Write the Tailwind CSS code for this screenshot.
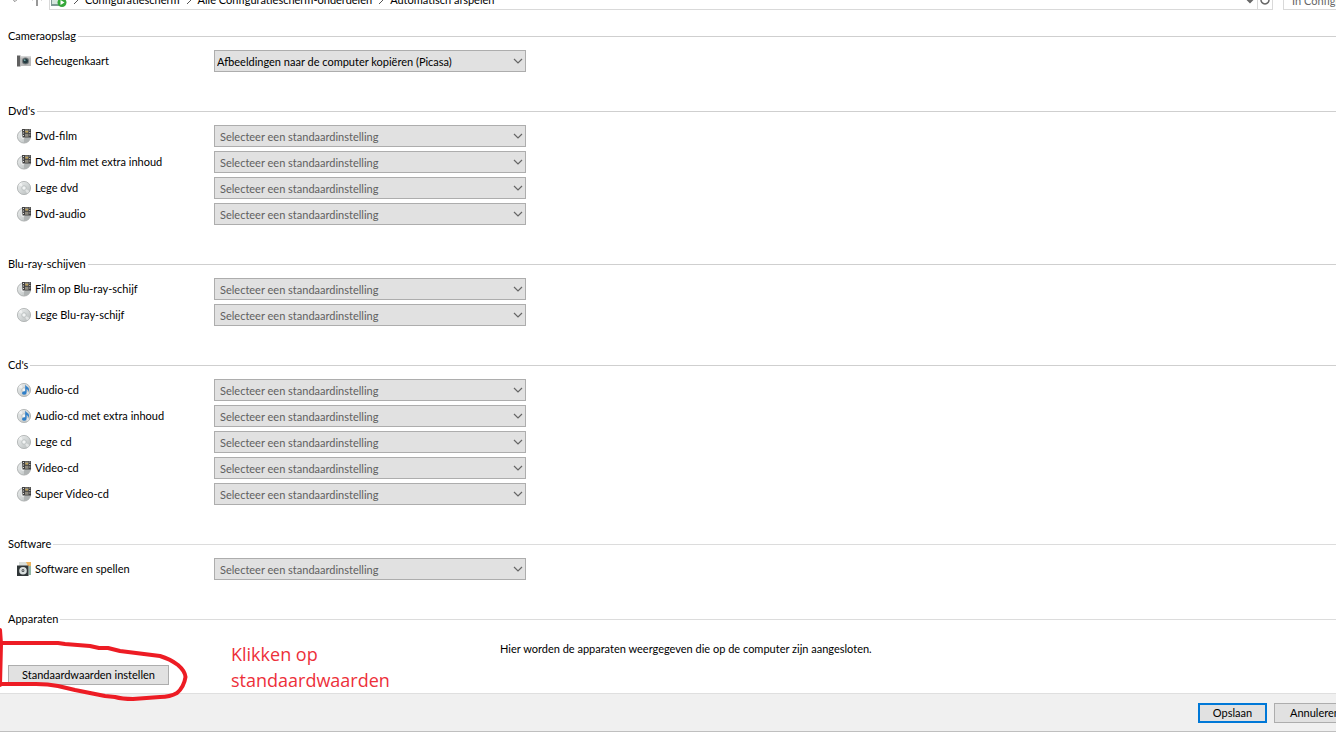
<!DOCTYPE html>
<html lang="nl">
  <head>
    <meta charset="UTF-8" />
    <meta name="viewport" content="width=device-width, initial-scale=1.0" />
    <script src="https://cdn.jsdelivr.net/npm/@tailwindcss/browser@4"></script>
    <title>Automatisch afspelen</title>
  </head>
  <body class="relative flex min-h-screen flex-col overflow-x-hidden bg-white font-['Lato','Noto_Sans',sans-serif] text-[11px] leading-4 text-black">
    <!-- shared icons -->
    <svg class="absolute h-0 w-0">
      <defs>
        <linearGradient id="silver" x1="0" y1="0" x2="1" y2="1">
          <stop offset="0" stop-color="#eef0f0" />
          <stop offset="0.5" stop-color="#d3d7d7" />
          <stop offset="1" stop-color="#b4b9b9" />
        </linearGradient>
        <symbol id="disc" viewBox="0 0 16 16">
          <circle cx="8" cy="8" r="6.6" fill="url(#silver)" stroke="#a9adad" stroke-width="0.8" />
          <path d="M8 8L2.500 5A6.200 6.200 0 0 1 5 2.600zM8 8l5.500 3A6.200 6.200 0 0 1 11 13.400z" fill="#fff" opacity="0.5" />
          <circle cx="8" cy="8" r="2.300" fill="#e8ebeb" stroke="#b2b7b7" stroke-width="0.7" />
          <circle cx="8" cy="8" r="0.800" fill="#fff" />
        </symbol>
        <symbol id="film" viewBox="0 0 16 16">
          <circle cx="8" cy="8.500" r="6.600" fill="url(#silver)" stroke="#a3a7a7" stroke-width="0.8" />
          <path d="M8 9h6.400A6.600 6.600 0 0 1 8 15z" fill="#b0b4b4" />
          <circle cx="7" cy="9" r="1.800" fill="#f4f5f5" />
          <path d="M6 1h9v8.500H6.500z" fill="#404040" />
          <path d="M9 1.500h3.500v3H9zM9 5.800h3.500v3H9z" fill="#8f8b80" />
          <path d="M9.500 3h2.500v1.500H9.500z" fill="#c3a355" />
          <path d="M7 2h1v1H7zM7 4.500h1v1H7zM7 7h1v1H7zM13.300 1.500h1v1h-1zM13.300 4h1v1h-1zM13.300 6.500h1v1h-1z" fill="#ddd" />
        </symbol>
        <symbol id="audio" viewBox="0 0 16 16">
          <use href="#disc" />
          <path d="M9.200 2.500c.5 1.800 3.600 2.300 3.800 4.800.1 1.100-.4 2-.9 2.600.2-1.500-.4-2.400-1.500-2.800v3.400c0 1.300-1 2.300-2.600 2.300-1.300 0-2-.8-1.900-1.700.1-1.200 1.500-2 3.100-1.700z" fill="#2f7fc9" />
        </symbol>
        <symbol id="camera" viewBox="0 0 16 16">
          <path d="M1 2.500h3.500v11H1z" fill="#606060" />
          <path d="M4.500 3h10.500v10H4.500z" fill="#b9b9b9" />
          <path d="M4.500 3h10.500v1.500H4.500z" fill="#d6d6d6" />
          <circle cx="9.500" cy="8" r="3.600" fill="#757a7b" />
          <circle cx="9.500" cy="8" r="2.500" fill="#253c42" />
          <circle cx="8.700" cy="7.200" r="0.900" fill="#72a6a4" />
        </symbol>
        <symbol id="software" viewBox="0 0 16 16">
          <path d="M3 1h12v13H3z" fill="#d9dedb" />
          <path d="M10 1h5v4h-3z" fill="#eeb45f" />
          <path d="M13 5h2v9h-2z" fill="#91b6a6" />
          <path d="M1 4.500h11.500V15H1z" fill="#303638" />
          <circle cx="7" cy="9.700" r="3.800" fill="#d9dede" />
          <circle cx="7" cy="9.700" r="1.400" fill="#303638" />
          <circle cx="7" cy="9.700" r="0.600" fill="#fff" />
        </symbol>
        <symbol id="chevron" viewBox="0 0 10 6">
          <path d="M1 1l4 4 4-4" fill="none" stroke="#666" stroke-width="1.200" />
        </symbol>
      </defs>
    </svg>

    <nav class="flex h-[10px] shrink-0 items-end overflow-hidden text-black">
      <div class="flex h-5 w-[49px] shrink-0 items-center justify-end gap-3 pr-1.5">
        <svg class="h-1.5 w-2" viewBox="0 0 10 6"><path d="M1 1l4 4 4-4" fill="none" stroke="#777" stroke-width="1.200" /></svg>
        <svg class="h-3 w-3" viewBox="0 0 12 12"><path d="M6 12V1M1 6l5-5 5 5" fill="none" stroke="#777" stroke-width="1.500" /></svg>
      </div>
      <div class="flex h-5 min-w-0 flex-1 items-center border border-[#d9d9d9] pl-px">
        <svg class="h-4 w-4 shrink-0" viewBox="0 0 16 16">
          <path d="M0 3h12v11H0z" fill="#7e9a94" />
          <path d="M1 4h10v8H1z" fill="#d5e5dd" />
          <circle cx="11" cy="10.500" r="4.500" fill="#35a83a" />
          <path d="M9.500 8l4 2.500-4 2.500z" fill="#fff" />
        </svg>
        <svg class="mx-1.5 h-2 w-1.5 shrink-0" viewBox="0 0 6 8"><path d="M1 0l4 4-4 4" fill="none" stroke="#555" /></svg>
        <a href="#">Configuratiescherm</a>
        <svg class="mx-1.5 h-2 w-1.5 shrink-0" viewBox="0 0 6 8"><path d="M1 0l4 4-4 4" fill="none" stroke="#555" /></svg>
        <a href="#">Alle Configuratiescherm-onderdelen</a>
        <svg class="mx-1.5 h-2 w-1.5 shrink-0" viewBox="0 0 6 8"><path d="M1 0l4 4-4 4" fill="none" stroke="#555" /></svg>
        <a href="#">Automatisch afspelen</a>
        <button type="button" aria-label="Vorige locaties" class="ml-auto px-0.5">
          <svg class="h-2 w-2.5" viewBox="0 0 10 8"><path d="M1 2l4 4 4-4" fill="none" stroke="#666" stroke-width="2" /></svg>
        </button>
        <button type="button" aria-label="Vernieuwen" class="flex h-5 w-[15px] items-center justify-center border-l border-[#d9d9d9]">
          <svg class="h-2.5 w-2.5" viewBox="0 0 10 10"><path d="M7 1.500A4 4 0 1 1 3 1.500" fill="none" stroke="#666" stroke-width="1.500" /></svg>
        </button>
      </div>
      <input type="text" aria-label="Zoeken" placeholder="In Configuratiescherm zoeken" class="-mr-2 ml-2.5 h-5 w-[61px] shrink-0 border border-[#d9d9d9] pl-2 placeholder:text-[#666]" />
    </nav>

    <main class="flex flex-1 flex-col pt-[18px]">
      <section class="pb-[29px]">
        <h2 class="flex items-center gap-0.5 pl-2">Cameraopslag<span class="h-px flex-1 bg-[#cfcfcf]"></span></h2>
        <div class="mt-1 flex h-[26px] items-center pl-4">
          <label for="card" class="flex w-[198px] items-center gap-[3px]"><svg class="h-4 w-4"><use href="#camera" /></svg>Geheugenkaart</label>
          <div class="relative w-[312px]">
            <select id="card" class="block h-[22px] w-full appearance-none border border-[#adadad] bg-[#e1e1e1] pt-0.5 pl-0.5"><option>Afbeeldingen naar de computer kopiëren (Picasa)</option></select>
            <svg class="pointer-events-none absolute top-2 right-[3px] h-1.5 w-2.5"><use href="#chevron" /></svg>
          </div>
        </div>
      </section>

      <section class="pb-[29px]">
        <h2 class="flex items-center gap-0.5 pl-2">Dvd's<span class="h-px flex-1 bg-[#cfcfcf]"></span></h2>
        <div class="mt-1 flex h-[26px] items-center pl-4">
          <label for="dvd-film" class="flex w-[198px] items-center gap-[3px]"><svg class="h-4 w-4"><use href="#film" /></svg>Dvd-film</label>
          <div class="relative w-[312px]">
            <select id="dvd-film" class="block h-[22px] w-full appearance-none border border-[#adadad] bg-[#e1e1e1] pt-0.5 pl-[5px] text-[#606060]"><option>Selecteer een standaardinstelling</option></select>
            <svg class="pointer-events-none absolute top-2 right-[3px] h-1.5 w-2.5"><use href="#chevron" /></svg>
          </div>
        </div>
        <div class="flex h-[26px] items-center pl-4">
          <label for="dvd-extra" class="flex w-[198px] items-center gap-[3px]"><svg class="h-4 w-4"><use href="#film" /></svg>Dvd-film met extra inhoud</label>
          <div class="relative w-[312px]">
            <select id="dvd-extra" class="block h-[22px] w-full appearance-none border border-[#adadad] bg-[#e1e1e1] pt-0.5 pl-[5px] text-[#606060]"><option>Selecteer een standaardinstelling</option></select>
            <svg class="pointer-events-none absolute top-2 right-[3px] h-1.5 w-2.5"><use href="#chevron" /></svg>
          </div>
        </div>
        <div class="flex h-[26px] items-center pl-4">
          <label for="dvd-blank" class="flex w-[198px] items-center gap-[3px]"><svg class="h-4 w-4"><use href="#disc" /></svg>Lege dvd</label>
          <div class="relative w-[312px]">
            <select id="dvd-blank" class="block h-[22px] w-full appearance-none border border-[#adadad] bg-[#e1e1e1] pt-0.5 pl-[5px] text-[#606060]"><option>Selecteer een standaardinstelling</option></select>
            <svg class="pointer-events-none absolute top-2 right-[3px] h-1.5 w-2.5"><use href="#chevron" /></svg>
          </div>
        </div>
        <div class="flex h-[26px] items-center pl-4">
          <label for="dvd-audio" class="flex w-[198px] items-center gap-[3px]"><svg class="h-4 w-4"><use href="#film" /></svg>Dvd-audio</label>
          <div class="relative w-[312px]">
            <select id="dvd-audio" class="block h-[22px] w-full appearance-none border border-[#adadad] bg-[#e1e1e1] pt-0.5 pl-[5px] text-[#606060]"><option>Selecteer een standaardinstelling</option></select>
            <svg class="pointer-events-none absolute top-2 right-[3px] h-1.5 w-2.5"><use href="#chevron" /></svg>
          </div>
        </div>
      </section>

      <section class="pb-[29px]">
        <h2 class="flex items-center gap-0.5 pl-2">Blu-ray-schijven<span class="h-px flex-1 bg-[#cfcfcf]"></span></h2>
        <div class="mt-1 flex h-[26px] items-center pl-4">
          <label for="bluray-film" class="flex w-[198px] items-center gap-[3px]"><svg class="h-4 w-4"><use href="#film" /></svg>Film op Blu-ray-schijf</label>
          <div class="relative w-[312px]">
            <select id="bluray-film" class="block h-[22px] w-full appearance-none border border-[#adadad] bg-[#e1e1e1] pt-0.5 pl-[5px] text-[#606060]"><option>Selecteer een standaardinstelling</option></select>
            <svg class="pointer-events-none absolute top-2 right-[3px] h-1.5 w-2.5"><use href="#chevron" /></svg>
          </div>
        </div>
        <div class="flex h-[26px] items-center pl-4">
          <label for="bluray-blank" class="flex w-[198px] items-center gap-[3px]"><svg class="h-4 w-4"><use href="#disc" /></svg>Lege Blu-ray-schijf</label>
          <div class="relative w-[312px]">
            <select id="bluray-blank" class="block h-[22px] w-full appearance-none border border-[#adadad] bg-[#e1e1e1] pt-0.5 pl-[5px] text-[#606060]"><option>Selecteer een standaardinstelling</option></select>
            <svg class="pointer-events-none absolute top-2 right-[3px] h-1.5 w-2.5"><use href="#chevron" /></svg>
          </div>
        </div>
      </section>

      <section class="pb-[29px]">
        <h2 class="flex items-center gap-0.5 pl-2">Cd's<span class="h-px flex-1 bg-[#cfcfcf]"></span></h2>
        <div class="mt-1 flex h-[26px] items-center pl-4">
          <label for="cd-audio" class="flex w-[198px] items-center gap-[3px]"><svg class="h-4 w-4"><use href="#audio" /></svg>Audio-cd</label>
          <div class="relative w-[312px]">
            <select id="cd-audio" class="block h-[22px] w-full appearance-none border border-[#adadad] bg-[#e1e1e1] pt-0.5 pl-[5px] text-[#606060]"><option>Selecteer een standaardinstelling</option></select>
            <svg class="pointer-events-none absolute top-2 right-[3px] h-1.5 w-2.5"><use href="#chevron" /></svg>
          </div>
        </div>
        <div class="flex h-[26px] items-center pl-4">
          <label for="cd-extra" class="flex w-[198px] items-center gap-[3px]"><svg class="h-4 w-4"><use href="#audio" /></svg>Audio-cd met extra inhoud</label>
          <div class="relative w-[312px]">
            <select id="cd-extra" class="block h-[22px] w-full appearance-none border border-[#adadad] bg-[#e1e1e1] pt-0.5 pl-[5px] text-[#606060]"><option>Selecteer een standaardinstelling</option></select>
            <svg class="pointer-events-none absolute top-2 right-[3px] h-1.5 w-2.5"><use href="#chevron" /></svg>
          </div>
        </div>
        <div class="flex h-[26px] items-center pl-4">
          <label for="cd-blank" class="flex w-[198px] items-center gap-[3px]"><svg class="h-4 w-4"><use href="#disc" /></svg>Lege cd</label>
          <div class="relative w-[312px]">
            <select id="cd-blank" class="block h-[22px] w-full appearance-none border border-[#adadad] bg-[#e1e1e1] pt-0.5 pl-[5px] text-[#606060]"><option>Selecteer een standaardinstelling</option></select>
            <svg class="pointer-events-none absolute top-2 right-[3px] h-1.5 w-2.5"><use href="#chevron" /></svg>
          </div>
        </div>
        <div class="flex h-[26px] items-center pl-4">
          <label for="cd-video" class="flex w-[198px] items-center gap-[3px]"><svg class="h-4 w-4"><use href="#film" /></svg>Video-cd</label>
          <div class="relative w-[312px]">
            <select id="cd-video" class="block h-[22px] w-full appearance-none border border-[#adadad] bg-[#e1e1e1] pt-0.5 pl-[5px] text-[#606060]"><option>Selecteer een standaardinstelling</option></select>
            <svg class="pointer-events-none absolute top-2 right-[3px] h-1.5 w-2.5"><use href="#chevron" /></svg>
          </div>
        </div>
        <div class="flex h-[26px] items-center pl-4">
          <label for="cd-super" class="flex w-[198px] items-center gap-[3px]"><svg class="h-4 w-4"><use href="#film" /></svg>Super Video-cd</label>
          <div class="relative w-[312px]">
            <select id="cd-super" class="block h-[22px] w-full appearance-none border border-[#adadad] bg-[#e1e1e1] pt-0.5 pl-[5px] text-[#606060]"><option>Selecteer een standaardinstelling</option></select>
            <svg class="pointer-events-none absolute top-2 right-[3px] h-1.5 w-2.5"><use href="#chevron" /></svg>
          </div>
        </div>
      </section>

      <section class="pb-[29px]">
        <h2 class="flex items-center gap-0.5 pl-2">Software<span class="h-px flex-1 bg-[#dcdcdc]"></span></h2>
        <div class="mt-1 flex h-[26px] items-center pl-4">
          <label for="software-games" class="flex w-[198px] items-center gap-[3px]"><svg class="h-4 w-4"><use href="#software" /></svg>Software en spellen</label>
          <div class="relative w-[312px]">
            <select id="software-games" class="block h-[22px] w-full appearance-none border border-[#adadad] bg-[#e1e1e1] pt-0.5 pl-[5px] text-[#606060]"><option>Selecteer een standaardinstelling</option></select>
            <svg class="pointer-events-none absolute top-2 right-[3px] h-1.5 w-2.5"><use href="#chevron" /></svg>
          </div>
        </div>
      </section>

      <section class="relative pb-2">
        <h2 class="flex items-center gap-0.5 pl-2">Apparaten<span class="h-px flex-1 bg-[#dcdcdc]"></span></h2>
        <p class="mt-3.5 pl-[500px]">Hier worden de apparaten weergegeven die op de computer zijn aangesloten.</p>
        <button type="button" class="mt-2 ml-2 block h-5 w-[161px] border border-[#adadad] bg-[#e1e1e1] leading-4">Standaardwaarden instellen</button>

        <!-- hand-drawn marker and note, on top of the page -->
        <svg class="pointer-events-none absolute top-4 left-0 z-10 h-20 w-[192px]" viewBox="0 0 192 80" fill="none" stroke="#ed1c24" stroke-width="4" stroke-linecap="round" stroke-linejoin="round">
          <path d="M0 3L1 17L0 58" />
          <path d="M0 16H58L65 17L90 19L99 21H108L120 24L160 29Q170 32 178 38Q185 44 185.500 50Q184 60 177 66Q170 70 160 70L133 72Q122 72 115 70L105 69L75 63L58 59Q48 57 36 57H0" />
        </svg>
        <p class="absolute top-[30px] left-[231px] font-['Open_Sans','Noto_Sans',sans-serif] text-[18px] leading-[26px] text-[#ed303a]">Klikken op<br />standaardwaarden</p>
      </section>
    </main>

    <footer class="flex h-[39px] shrink-0 items-center justify-end gap-[7px] border-t border-b border-t-[#dfdfdf] border-b-[#bfbfbf] bg-[#f0f0f0]">
      <button type="button" class="h-5 w-[69px] border-2 border-[#0078d7] bg-[#e1e1e1]">Opslaan</button>
      <button type="button" class="-mr-5 h-5 w-[82px] border border-[#adadad] bg-[#e1e1e1]">Annuleren</button>
    </footer>
  </body>
</html>
